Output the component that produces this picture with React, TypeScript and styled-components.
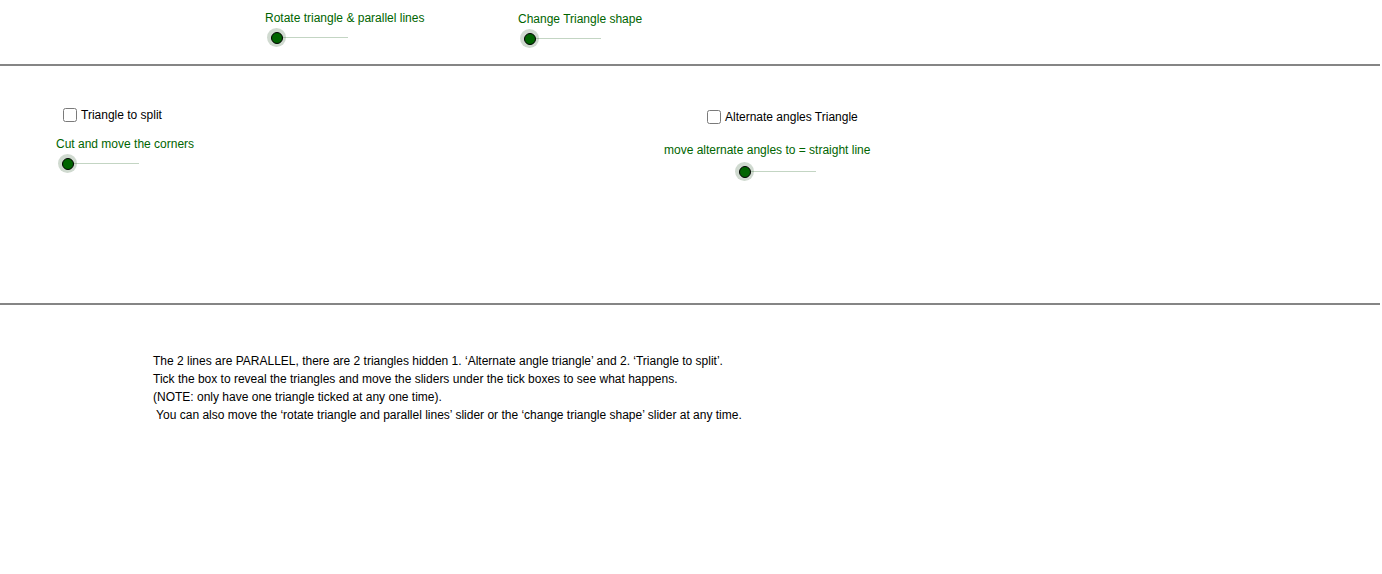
import React from "react";
import styled, { createGlobalStyle } from "styled-components";

const GlobalStyle = createGlobalStyle`
  html, body {
    margin: 0;
    padding: 0;
    background: #ffffff;
  }
  body {
    font-family: "Liberation Sans", Arial, sans-serif;
    font-size: 12px;
    color: #000000;
  }
`;

const Applet = styled.div`
  width: 1380px;
  display: flex;
  flex-direction: column;
`;

const TopPanel = styled.div`
  height: 64px;
  box-sizing: border-box;
  padding: 11px 0 0 265px;
  display: grid;
  grid-template-columns: 253px auto;
  align-items: start;
`;

const Divider = styled.div`
  height: 2px;
  background: #858585;
`;

const MiddlePanel = styled.div`
  height: 237px;
  box-sizing: border-box;
  padding-left: 56px;
  display: grid;
  grid-template-columns: 608px auto;
  align-items: start;
`;

const Column = styled.div<{ $top: number }>`
  display: flex;
  flex-direction: column;
  align-items: flex-start;
  padding-top: ${(p) => p.$top}px;
`;

const Widget = styled.div<{ $shift?: number; $gap?: number }>`
  display: flex;
  flex-direction: column;
  align-items: flex-start;
  gap: ${(p) => p.$gap ?? 3}px;
  margin-top: ${(p) => p.$shift ?? 0}px;
`;

const SliderLabel = styled.span`
  color: #006400;
  font-size: 12px;
  line-height: 14px;
  white-space: nowrap;
`;

const Track = styled.div<{ $inset: number }>`
  position: relative;
  height: 18px;
  width: 72px;
  margin-left: ${(p) => p.$inset}px;
  &::before {
    content: "";
    position: absolute;
    left: 0;
    right: 0;
    top: 9px;
    height: 1px;
    background: #c3d5c3;
  }
`;

const Knob = styled.span`
  position: absolute;
  left: -9px;
  top: 0;
  width: 19px;
  height: 19px;
  border-radius: 50%;
  background: rgba(60, 100, 60, 0.24);
  display: flex;
  align-items: center;
  justify-content: center;
  &::after {
    content: "";
    width: 10px;
    height: 10px;
    border-radius: 50%;
    background: #006400;
    border: 1.5px solid #000000;
  }
`;

const CheckRow = styled.label<{ $inset: number }>`
  display: flex;
  align-items: center;
  gap: 4px;
  height: 16px;
  margin-left: ${(p) => p.$inset}px;
  font-size: 12px;
  line-height: 14px;
  color: #000000;
  white-space: nowrap;
`;

const Box = styled.span`
  width: 12px;
  height: 12px;
  border: 1.5px solid #7a7a7a;
  border-radius: 2.5px;
  background: #ffffff;
`;

const Notes = styled.div`
  padding: 47px 0 0 153px;
  display: flex;
  flex-direction: column;
`;

const NoteLine = styled.div`
  font-size: 12px;
  line-height: 18px;
  white-space: pre;
  color: #000000;
`;

type SliderProps = { label: string; inset?: number; shift?: number; gap?: number };

const Slider = ({ label, inset = 11, shift, gap }: SliderProps) => (
  <Widget $shift={shift} $gap={gap}>
    <SliderLabel>{label}</SliderLabel>
    <Track $inset={inset}>
      <Knob />
    </Track>
  </Widget>
);

const Check = ({ label, inset }: { label: string; inset: number }) => (
  <CheckRow $inset={inset}>
    <Box />
    {label}
  </CheckRow>
);

const notes = [
  "The 2 lines are PARALLEL, there are 2 triangles hidden 1. \u2018Alternate angle triangle\u2019 and 2. \u2018Triangle to split\u2019.",
  "Tick the box to reveal the triangles and move the sliders under the tick boxes to see what happens.",
  "(NOTE: only have one triangle ticked at any one time).",
  " You can also move the \u2018rotate triangle and parallel lines\u2019 slider or the \u2018change triangle shape\u2019 slider at any time.",
];

export default function App() {
  return (
    <>
      <GlobalStyle />
      <Applet>
        <TopPanel>
          <Slider label="Rotate triangle & parallel lines" />
          <Slider label="Change Triangle shape" shift={1} />
        </TopPanel>
        <Divider />
        <MiddlePanel>
          <Column $top={41}>
            <Check label="Triangle to split" inset={7} />
            <Slider label="Cut and move the corners" shift={14} />
          </Column>
          <Column $top={43}>
            <Check label="Alternate angles Triangle" inset={43} />
            <Slider
              label="move alternate angles to = straight line"
              inset={80}
              shift={18}
              gap={5}
            />
          </Column>
        </MiddlePanel>
        <Divider />
        <Notes>
          {notes.map((line, i) => (
            <NoteLine key={i}>{line}</NoteLine>
          ))}
        </Notes>
      </Applet>
    </>
  );
}
